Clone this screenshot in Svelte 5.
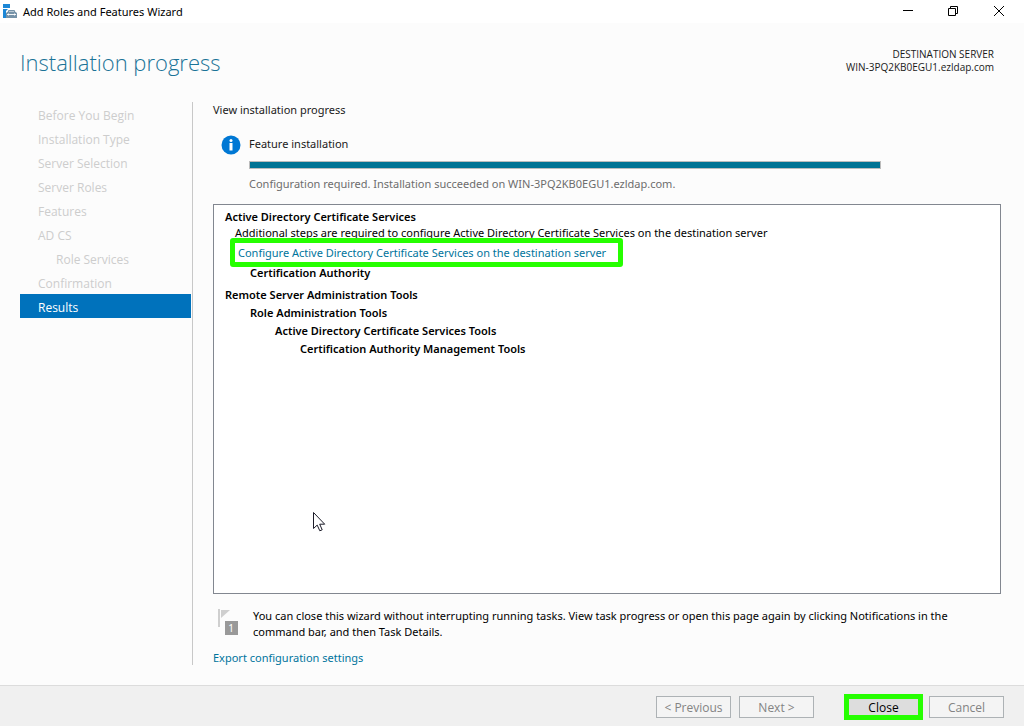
<script lang="ts">
  interface Step {
    label: string;
    nested?: boolean;
  }

  const steps: Step[] = [
    { label: 'Before You Begin' },
    { label: 'Installation Type' },
    { label: 'Server Selection' },
    { label: 'Server Roles' },
    { label: 'Features' },
    { label: 'AD CS' },
    { label: 'Role Services', nested: true },
    { label: 'Confirmation' },
    { label: 'Results' },
  ];

  const current = 'Results';
  const server = 'WIN-3PQ2KB0EGU1.ezldap.com';
</script>

<div class="wizard">
  <div class="titlebar">
    <svg class="app-icon" width="16" height="16" viewBox="0 0 16 16">
      <path d="M1 0h7v4H1zM1 5h5L4 7v7H1z" fill="#1c87d6" />
      <path d="M4 9l2-1.500h7L15 9v5H4z" fill="#7592a8" />
      <path d="M6.500 8V6.500h6V8" fill="none" stroke="#7592a8" />
      <path d="M5 10.500h9M6.500 9.500v2M12.500 9.500v2" fill="none" stroke="#fff" stroke-width="0.900" />
    </svg>
    <span class="app-name">Add Roles and Features Wizard</span>
    <div class="window-buttons">
      <button aria-label="Minimize">
        <svg width="12" height="12" viewBox="0 0 12 12"><path d="M2 4.500h10" /></svg>
      </button>
      <button aria-label="Restore">
        <svg width="12" height="12" viewBox="0 0 12 12"><path d="M1.500 2.500h7v7h-7zM3.500 2.500v-2h7v7h-2" /></svg>
      </button>
      <button aria-label="Close window">
        <svg width="12" height="12" viewBox="0 0 12 12"><path d="M1 0l10 10M11 0L1 10" /></svg>
      </button>
    </div>
  </div>

  <header>
    <h1>Installation progress</h1>
    <div class="destination">
      <div>DESTINATION SERVER</div>
      <div>{server}</div>
    </div>
  </header>

  <div class="body">
    <nav>
      {#each steps as step}
        <div class="step" class:nested={step.nested} class:current={step.label === current}>{step.label}</div>
      {/each}
    </nav>

    <main>
      <h2>View installation progress</h2>

      <div class="status">
        <svg class="info-icon" width="20" height="20" viewBox="0 0 20 20">
          <circle cx="10" cy="10" r="9.500" fill="#0078d4" />
          <circle cx="10" cy="5.500" r="1.500" fill="#fff" />
          <path d="M8.500 8h3v7.500h-3z" fill="#fff" />
        </svg>
        <div class="status-text">
          <div id="task">Feature installation</div>
          <div class="progress" role="progressbar" aria-labelledby="task" aria-valuenow="100">
            <div class="fill" style="width: 100%"></div>
          </div>
          <div class="message">Configuration required. Installation succeeded on {server}.</div>
        </div>
      </div>

      <div class="results">
        <div class="feature">Active Directory Certificate Services</div>
        <div class="note">Additional steps are required to configure Active Directory Certificate Services on the destination server</div>
        <div class="action">
          <a class="highlight" href="#configure">Configure Active Directory Certificate Services on the destination server</a>
        </div>
        <div class="feature level-1">Certification Authority</div>
        <div class="feature group">Remote Server Administration Tools</div>
        <div class="feature level-1">Role Administration Tools</div>
        <div class="feature level-2">Active Directory Certificate Services Tools</div>
        <div class="feature level-3">Certification Authority Management Tools</div>

        <svg class="cursor" width="13" height="20" viewBox="0 0 13 20">
          <path d="M.5.500v16l3.700-3.400 2.600 5.700 2.400-1-2.500-5.600h5z" fill="#fff" stroke="#1b1b28" />
        </svg>
      </div>

      <div class="hint">
        <svg width="24" height="28" viewBox="0 0 24 28">
          <path d="M1 1h2v18H1z" fill="#cfcfcf" />
          <path d="M4 2h9L4 10z" fill="#cfcfcf" />
          <path d="M8 13h13v14H8z" fill="#999" />
          <text x="14" y="24" text-anchor="middle">1</text>
        </svg>
        <p>
          You can close this wizard without interrupting running tasks. View task progress or open this page again by
          clicking Notifications in the command bar, and then Task Details.
        </p>
      </div>

      <a class="export" href="#export">Export configuration settings</a>
    </main>
  </div>

  <footer>
    <button disabled>&lt; Previous</button>
    <button disabled>Next &gt;</button>
    <button class="close">Close</button>
    <button disabled>Cancel</button>
  </footer>
</div>

<style>
  :global(body) {
    margin: 0;
  }

  .wizard {
    display: flex;
    flex-direction: column;
    min-height: 100vh;
    background: #fcfcfc;
    color: #1a1a1a;
    font-family: 'Noto Sans', 'Open Sans', sans-serif;
    font-size: 11px;
    line-height: 16px;
  }

  button {
    font: inherit;
  }

  a {
    color: #00749c;
    text-decoration: none;
  }

  .titlebar {
    display: flex;
    align-items: center;
    height: 23px;
    padding-left: 2px;
    background: #fff;
    color: #000;
  }

  .app-name {
    flex: 1;
    margin-left: 5px;
  }

  .window-buttons {
    display: flex;
    padding-right: 2px;
  }

  .window-buttons button {
    display: flex;
    align-items: center;
    justify-content: center;
    width: 46px;
    height: 22px;
    padding: 0;
    border: none;
    background: none;
  }

  .window-buttons path {
    fill: none;
    stroke: #000;
  }

  header {
    display: flex;
    justify-content: space-between;
    height: 79px;
    padding: 0 30px 0 20px;
    box-sizing: border-box;
  }

  h1 {
    margin: 23px 0 0;
    color: #1a7397;
    font-family: 'Open Sans', sans-serif;
    font-size: 22px;
    font-weight: 300;
    line-height: 32px;
  }

  .destination {
    padding-top: 25px;
    font-family: 'Open Sans', sans-serif;
    font-size: 10px;
    line-height: 13px;
    text-align: right;
  }

  .body {
    display: flex;
    flex: 1;
    padding: 0 23px 20px 20px;
  }

  nav {
    flex: none;
    width: 171px;
    padding-right: 1px;
    border-right: 1px solid #c8c8c8;
    font-family: 'Open Sans', sans-serif;
    font-size: 12px;
  }

  .step {
    height: 24px;
    padding: 2px 0 0 18px;
    box-sizing: border-box;
    color: #cdcdcd;
    line-height: 24px;
  }

  .step.nested {
    padding-left: 36px;
  }

  .step.current {
    background: #0072bc;
    color: #fff;
  }

  main {
    display: flex;
    flex: 1;
    flex-direction: column;
    min-width: 0;
    margin-left: 20px;
  }

  h2 {
    margin: 0 0 18px;
    font-size: 11px;
    font-weight: 400;
  }

  .status {
    display: flex;
    gap: 8px;
    padding: 0 120px 0 8px;
  }

  .info-icon {
    flex: none;
    margin-top: -1px;
  }

  .status-text {
    flex: 1;
  }

  .progress {
    height: 6px;
    margin: 9px 0 7px;
    border: 1px solid #bcbcbc;
  }

  .fill {
    height: 100%;
    background: #007394;
  }

  .message {
    color: #6d6d6d;
  }

  .results {
    position: relative;
    flex: 1;
    margin-top: 12px;
    padding: 3px 11px;
    border: 1px solid #828790;
    background: #fff;
    color: #000;
  }

  .feature {
    font-weight: 600;
    line-height: 18px;
  }

  .feature.group {
    margin-top: 4px;
  }

  .level-1 {
    margin-left: 25px;
  }

  .level-2 {
    margin-left: 50px;
  }

  .level-3 {
    margin-left: 75px;
  }

  .note {
    margin-left: 10px;
    line-height: 14px;
  }

  .action {
    display: flex;
    margin: -2px 0 -3px 5px;
  }

  .highlight {
    z-index: 1;
    padding: 0 12px 0 3px;
    border: 5px solid #26ff00;
    border-radius: 3px;
    line-height: 19px;
  }

  .cursor {
    position: absolute;
    top: 307px;
    left: 99px;
  }

  .hint {
    display: flex;
    gap: 12px;
    margin-top: 14px;
    padding: 0 24px 0 4px;
    color: #000;
  }

  .hint svg {
    flex: none;
  }

  .hint text {
    fill: #fff;
    font-size: 10px;
  }

  .hint p {
    margin: 0;
  }

  .export {
    align-self: flex-start;
    margin: 10px 0 -1px;
  }

  footer {
    display: flex;
    justify-content: flex-end;
    gap: 8px;
    padding: 10px 20px 8px;
    border-top: 1px solid #dcdcdc;
    background: #f0f0f0;
  }

  footer button {
    width: 75px;
    height: 22px;
    padding: 1px 0 0;
    border: 1px solid #adb2b5;
    background: #f4f4f4;
    color: #838383;
    font-family: 'Open Sans', sans-serif;
    font-size: 12px;
  }

  footer .close {
    margin-left: 24px;
    background: #ddd;
    color: #000;
    outline: 5px solid #26ff00;
    outline-offset: -3px;
  }
</style>
